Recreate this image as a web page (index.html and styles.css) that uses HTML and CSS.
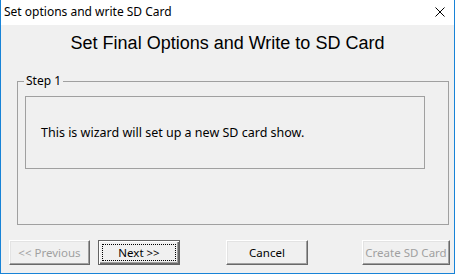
FILE: index.html
```html
<!DOCTYPE html>
<html>
<head>
  <title>Set options and write SD Card</title>
  <link rel="stylesheet" href="styles.css">
</head>
<body>
  <div class="window">
    <div class="titlebar">
      <span class="title">Set options and write SD Card</span>
      <svg class="close" width="10" height="10" viewBox="0 0 10 10">
        <path d="M0.5 0.5 L9.5 9.5 M9.5 0.5 L0.5 9.5" stroke="#000" stroke-width="1" fill="none"/>
      </svg>
    </div>
    <div class="content">
      <h1>Set Final Options and Write to SD Card</h1>
      <fieldset class="group">
        <legend>Step 1</legend>
        <div class="panel">This is wizard will set up a new SD card show.</div>
      </fieldset>
      <div class="buttons">
        <button class="btn prev" disabled>&lt;&lt; Previous</button>
        <button class="btn next default"><span class="focus">Next &gt;&gt;</span></button>
        <button class="btn cancel">Cancel</button>
        <button class="btn create" disabled>Create SD Card</button>
      </div>
    </div>
  </div>
</body>
</html>
```

FILE: styles.css
```css
body {
  margin: 0;
  background: #f0f0f0;
  font-family: "Noto Sans", sans-serif;
  font-size: 12px;
}
.window {
  width: 455px;
  height: 274px;
  box-sizing: border-box;
  border: 1px solid #1883d7;
  border-top: none;
  background: #f0f0f0;
  display: flex;
  flex-direction: column;
}
.titlebar {
  height: 25px;
  background: #fff;
  display: flex;
  align-items: center;
  justify-content: space-between;
  padding: 0 9px 0 3px;
}
.title {
  color: #000;
  font-size: 12px;
  margin-top: -2px;
}
.close {
  display: block;
  margin-top: -1px;
}
.content {
  flex: 1;
  display: flex;
  flex-direction: column;
}
h1 {
  margin: 8px 0 0;
  font-family: "Liberation Sans", Arial, sans-serif;
  font-weight: normal;
  font-size: 18px;
  line-height: 20px;
  text-align: center;
  color: #000;
}
.group {
  margin: 21px 5px 0 16px;
  padding: 8px 23px 55px 7px;
  border: 1px solid #a0a0a0;
  min-width: 0;
}
.group legend {
  padding: 0 2px;
  margin-left: -1px;
  line-height: 14px;
  font-size: 12px;
}
.panel {
  height: 71px;
  border: 1px solid #a0a0a0;
  padding-left: 15px;
  font-size: 12.5px;
  display: flex;
  align-items: center;
}
.buttons {
  display: flex;
  padding: 15px 0 0 8px;
}
.btn {
  height: 25px;
  padding: 0;
  font-family: "Noto Sans", sans-serif;
  font-size: 11.5px;
  color: #000;
  background: #f0f0f0;
  border: 1px solid;
  border-color: #fff #696969 #696969 #fff;
  box-shadow: inset -1px -1px #a0a0a0, inset 1px 1px #e3e3e3;
}
.btn:disabled {
  color: #a0a0a0;
}
.prev { width: 81px; }
.next { width: 82px; margin-left: 8px; }
.cancel { width: 82px; margin-left: 46px; }
.create { width: 88px; margin-left: 54px; }
.default {
  border: 1px solid #646464;
  box-shadow: inset 1px 1px #fff, inset -1px -1px #696969, inset -2px -2px #a0a0a0;
  padding: 3px;
}
.focus {
  display: flex;
  align-items: center;
  justify-content: center;
  height: 100%;
  box-sizing: border-box;
  border: 1px dotted #000;
}
```
